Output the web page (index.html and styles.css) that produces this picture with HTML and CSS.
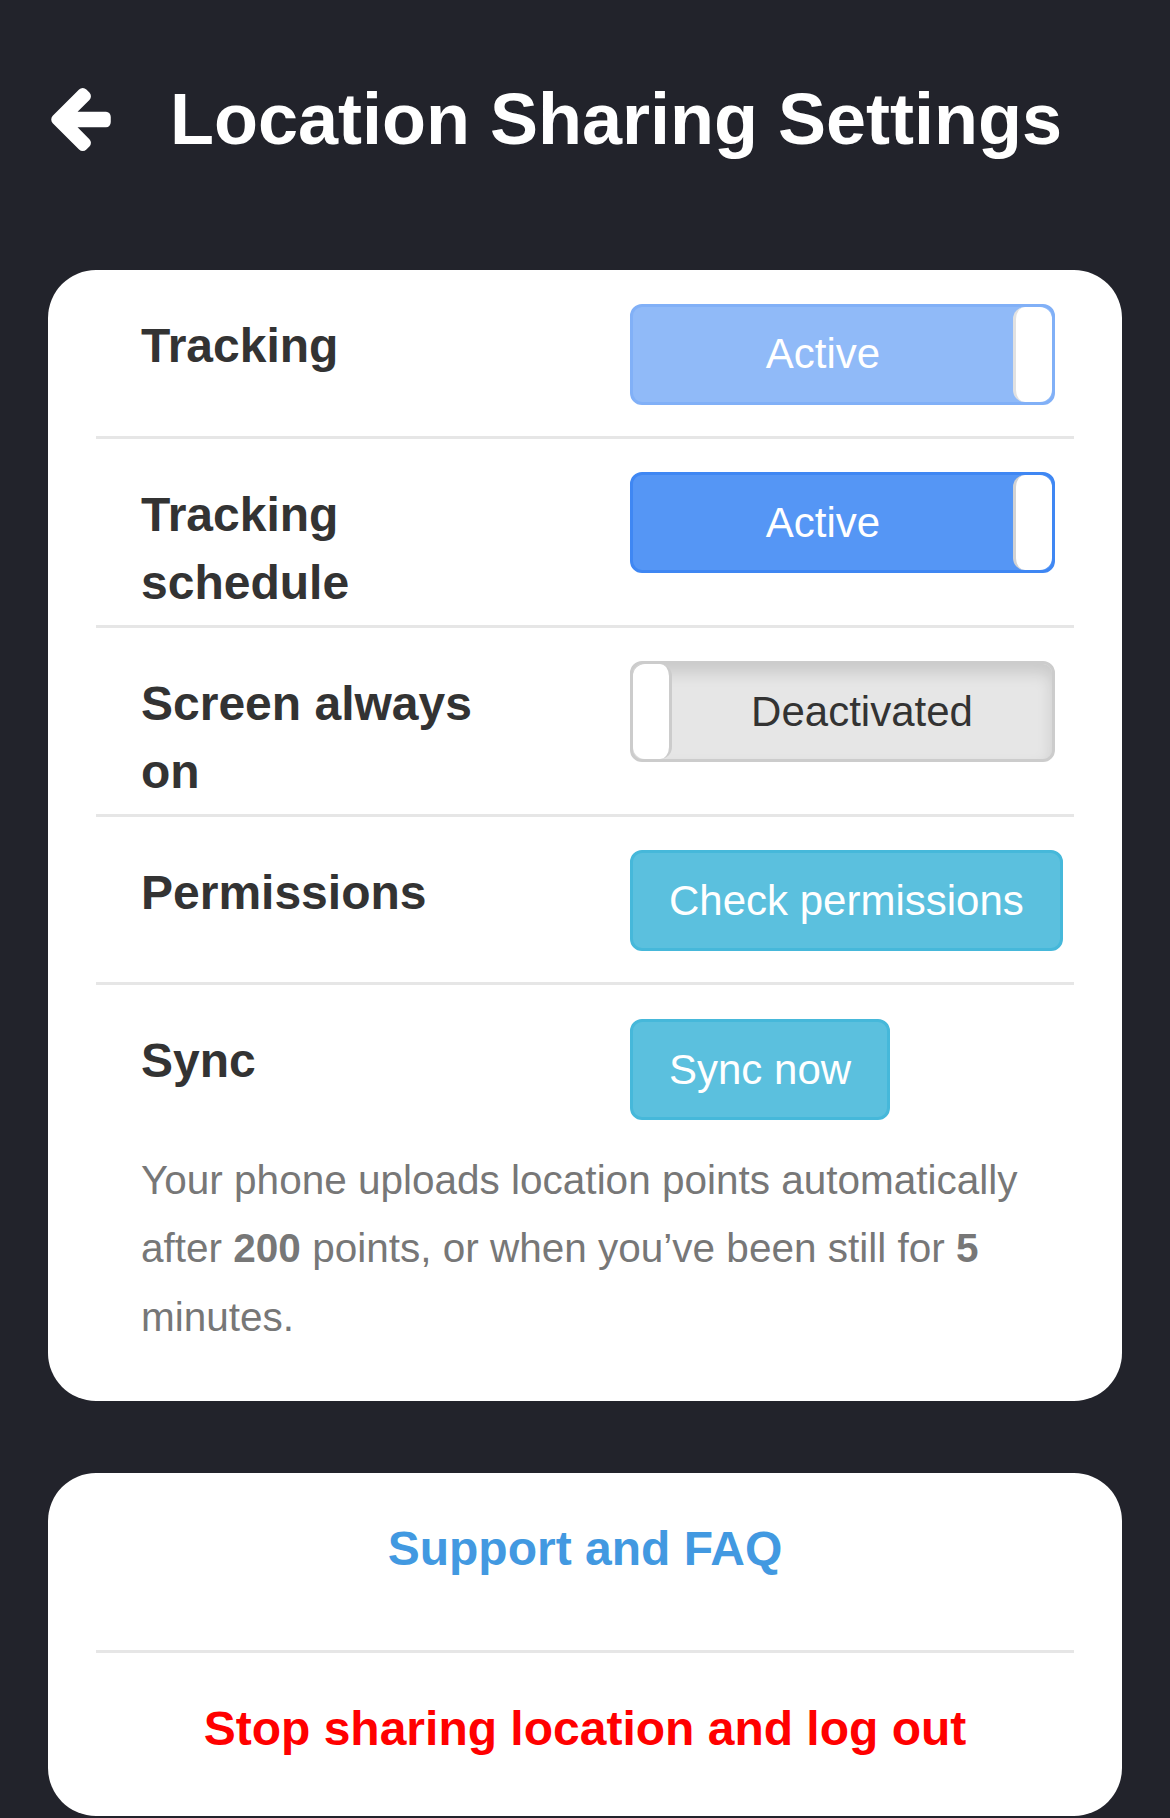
FILE: index.html
```html
<!DOCTYPE html>
<html lang="en">
<head>
  <meta charset="UTF-8" />
  <title>Location Sharing Settings</title>
  <link rel="stylesheet" href="styles.css">
</head>
<body>
  <header class="topbar">
    <a class="back-btn" href="#" aria-label="Back">
      <svg width="60" height="63" viewBox="192 181 1472 1558">
        <path fill="#fff" d="M1664 896v128q0 53-32.5 90.5t-84.5 37.5h-704l293 294q38 36 38 90t-38 90l-75 76q-37 37-90 37-52 0-91-37l-651-652q-37-37-37-90 0-52 37-91l651-650q38-38 91-38 52 0 90 38l75 74q38 38 38 91t-38 91l-293 293h704q52 0 84.5 37.5t32.5 90.5z"/>
      </svg>
    </a>
    <h1>Location Sharing Settings</h1>
  </header>

  <main class="content">
    <section class="panel settings-panel">
      <div class="setting-row">
        <div class="setting-label">Tracking</div>
        <div class="setting-control">
          <div class="toggle toggle-on toggle-disabled">
            <span class="toggle-text">Active</span>
            <span class="toggle-handle"></span>
          </div>
        </div>
      </div>

      <div class="setting-row">
        <div class="setting-label">Tracking schedule</div>
        <div class="setting-control">
          <div class="toggle toggle-on">
            <span class="toggle-text">Active</span>
            <span class="toggle-handle"></span>
          </div>
        </div>
      </div>

      <div class="setting-row">
        <div class="setting-label">Screen always on</div>
        <div class="setting-control">
          <div class="toggle toggle-off">
            <span class="toggle-handle"></span>
            <span class="toggle-text">Deactivated</span>
          </div>
        </div>
      </div>

      <div class="setting-row">
        <div class="setting-label">Permissions</div>
        <div class="setting-control">
          <button class="btn btn-info">Check permissions</button>
        </div>
      </div>

      <div class="setting-row no-border">
        <div class="setting-label">Sync</div>
        <div class="setting-control">
          <button class="btn btn-info">Sync now</button>
        </div>
      </div>

      <p class="sync-note">Your phone uploads location points automatically after <b>200</b> points, or when you’ve been still for <b>5</b> minutes.</p>
    </section>

    <section class="panel links-panel">
      <a class="panel-link link-support" href="#">Support and FAQ</a>
      <a class="panel-link link-logout" href="#">Stop sharing location and log out</a>
    </section>
  </main>
</body>
</html>
```

FILE: styles.css
```css
* {
  box-sizing: border-box;
}

body {
  margin: 0;
  font-family: 'Liberation Sans', Arial, sans-serif;
  background: #22232b;
}

.topbar {
  display: flex;
  align-items: center;
  padding: 76px 0 0 51px;
}

.back-btn {
  display: flex;
  width: 60px;
}

.topbar h1 {
  margin: 0 0 0 59px;
  font-size: 72px;
  line-height: 86.4px;
  font-weight: bold;
  color: white;
}

.content {
  padding: 0 48px;
}

.panel {
  background-color: white;
  border-radius: 48px;
  padding: 0 48px;
}

.settings-panel {
  margin-top: 107.6px;
  padding-bottom: 50px;
}

.setting-row {
  display: grid;
  grid-template-columns: minmax(0, 1fr) minmax(0, 1fr);
  padding-top: 33.5px;
  border-bottom: 3px solid #e6e6e6;
}

.setting-row.no-border {
  border-bottom: none;
}

.setting-label {
  padding: 0 45px;
  margin: 8.5px 0 7px;
  font-size: 48px;
  line-height: 68.57px;
  font-weight: bold;
  color: #333;
}

.setting-control {
  padding: 0 45px;
  margin-bottom: 31px;
}

/* toggle switches */
.toggle {
  display: flex;
  width: 425px;
  height: 101px;
  border: 3px solid;
  border-radius: 12px;
  overflow: hidden;
  font-size: 42px;
}

.toggle-text {
  flex: 1;
  display: flex;
  align-items: center;
  justify-content: center;
}

.toggle-handle {
  width: 39px;
  background: white;
  border-radius: 12px;
}

.toggle-on {
  background-color: #5596f5;
  border-color: #3f87f3;
  color: white;
}

.toggle-on .toggle-handle {
  border-left: 3px solid #d2d2d2;
}

.toggle-disabled {
  opacity: 0.65;
}

.toggle-off {
  background-color: #e6e6e6;
  border-color: #cccccc;
  color: #333;
  box-shadow: inset 0 9px 15px rgba(0, 0, 0, 0.125);
}

.toggle-off .toggle-handle {
  border-right: 3px solid #cccccc;
}

.btn {
  display: inline-block;
  margin: 0;
  padding: 18px 36px;
  font-family: inherit;
  font-size: 42px;
  line-height: 59px;
  white-space: nowrap;
  border: 3px solid;
  border-radius: 12px;
  cursor: pointer;
}

.btn-info {
  background-color: #5bc0de;
  border-color: #46b8da;
  color: white;
}

.sync-note {
  margin: -5px 45px 0;
  font-size: 40.5px;
  line-height: 68.57px;
  color: #777;
}

.links-panel {
  margin-top: 72px;
}

.panel-link {
  display: block;
  text-align: center;
  font-size: 48px;
  line-height: 68.57px;
  font-weight: bold;
  text-decoration: none;
}

.link-support {
  padding: 42px 0 66px;
  border-bottom: 3px solid #e6e6e6;
  color: #4299e1;
}

.link-logout {
  padding: 42px 0 52px;
  color: #ff0000;
}
```
